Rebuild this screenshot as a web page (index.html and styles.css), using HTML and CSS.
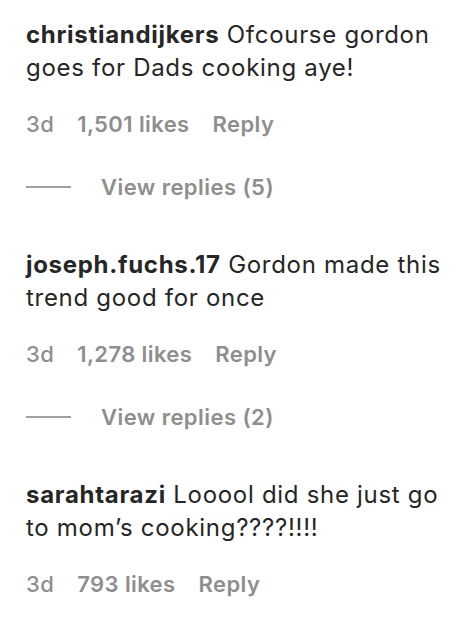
FILE: index.html
```html
<!DOCTYPE html>
<html>

<head>
	<title>Comments</title>
	<link rel="stylesheet" href="styles.css">
</head>

<body>
	<div class="comment-list">
		<div class="comment">
			<p class="comment-text"><span class="username">christiandijkers</span> Ofcourse gordon goes for Dads cooking aye!</p>
			<div class="comment-meta">
				<span>3d</span>
				<span>1,501 likes</span>
				<span>Reply</span>
			</div>
			<div class="view-replies">
				<span class="line"></span>
				<span>View replies (5)</span>
			</div>
		</div>

		<div class="comment">
			<p class="comment-text"><span class="username">joseph.fuchs.17</span> Gordon made this trend good for once</p>
			<div class="comment-meta">
				<span>3d</span>
				<span>1,278 likes</span>
				<span>Reply</span>
			</div>
			<div class="view-replies">
				<span class="line"></span>
				<span>View replies (2)</span>
			</div>
		</div>

		<div class="comment">
			<p class="comment-text"><span class="username">sarahtarazi</span> Looool did she just go to mom’s cooking????!!!!</p>
			<div class="comment-meta">
				<span>3d</span>
				<span>793 likes</span>
				<span>Reply</span>
			</div>
		</div>
	</div>
</body>

</html>
```

FILE: styles.css
```css
body {
	margin: 0;
	font-family: Inter, "Liberation Sans", Arial, sans-serif;
	background-color: #fff;
	color: #262626;
}

.comment-list {
	padding: 18px 20px 0 26px;
}

.comment {
	margin-bottom: 46px;
}

.comment-text {
	margin: 0;
	font-size: 24px;
	line-height: 33px;
	letter-spacing: 0.7px;
}

.username {
	font-weight: 700;
}

.comment-meta {
	display: flex;
	gap: 23px;
	margin-top: 25px;
	font-size: 22px;
	line-height: 30px;
	letter-spacing: 0.4px;
	font-weight: 600;
	color: #8e8e8e;
}

.comment-meta span:first-child {
	font-weight: 500;
}

.view-replies {
	display: flex;
	align-items: center;
	margin-top: 33px;
	font-size: 22px;
	line-height: 30px;
	letter-spacing: 0.45px;
	font-weight: 600;
	color: #8e8e8e;
}

.view-replies .line {
	width: 45px;
	height: 1.5px;
	background-color: #a0a0a0;
	margin-right: 30px;
}
```
